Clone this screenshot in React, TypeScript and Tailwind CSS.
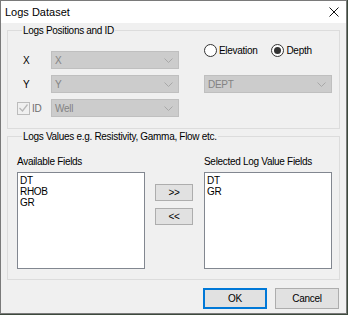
import { useState } from "react";

const available = ["DT", "RHOB", "GR"];
const selected = ["DT", "GR"];

function Chevron() {
  return (
    <svg width="9" height="5" viewBox="0 0 9 5" className="shrink-0">
      <path d="M0.5 0.5 L4.5 4.5 L8.5 0.5" fill="none" stroke="#a8a8a8" strokeWidth="1" />
    </svg>
  );
}

function Combo({ value }: { value: string }) {
  return (
    <div className="flex h-[18px] w-[128px] items-center justify-between border border-[#bfbfbf] bg-[#cccccc] pl-[3px] pr-[5px] text-[#838383]">
      <span>{value}</span>
      <Chevron />
    </div>
  );
}

function Radio({ label, checked, onClick }: { label: string; checked: boolean; onClick: () => void }) {
  return (
    <div className="flex cursor-default items-center gap-[2px]" onClick={onClick}>
      <div className="flex h-[13px] w-[13px] items-center justify-center rounded-full border border-[#333333] bg-white">
        {checked && <div className="h-[7px] w-[7px] rounded-full bg-[#333333]" />}
      </div>
      <span className="whitespace-nowrap text-black">{label}</span>
    </div>
  );
}

function ListBox({ items }: { items: string[] }) {
  return (
    <div className="h-[97px] w-[128px] border border-[#828790] bg-white px-[2px] pt-[2px] leading-[11px] text-black">
      {items.map((item) => (
        <div key={item}>{item}</div>
      ))}
    </div>
  );
}

function Button({ label, primary }: { label: string; primary?: boolean }) {
  return (
    <button
      type="button"
      className={
        primary
          ? "h-[21px] w-[64px] border-2 border-[#0078d7] bg-[#e1e1e1] text-black"
          : "h-[21px] w-[64px] border border-[#adadad] bg-[#e1e1e1] text-black"
      }
    >
      {label}
    </button>
  );
}

function GroupTitle({ children }: { children: string }) {
  return (
    <span className="-mt-[7px] ml-[5px] h-[13px] w-fit whitespace-nowrap bg-[#f0f0f0] px-[1px] leading-[13px] text-black">
      {children}
    </span>
  );
}

export default function App() {
  const [mode, setMode] = useState("depth");

  return (
    <div className="h-screen w-screen bg-[#3d4a3d] font-['Liberation_Sans',sans-serif] text-[10px] tracking-[-0.3px]">
      <div className="flex h-[314px] w-[347px] flex-col border border-[#7a7a7a] bg-[#f0f0f0]">
        <div className="flex h-[22px] shrink-0 items-center justify-between bg-white pl-[4px] pr-[7px] text-[11px] tracking-normal text-black">
          <span>Logs Dataset</span>
          <svg width="10" height="10" viewBox="0 0 10 10">
            <path d="M0.5 0.5 L9.5 9.5 M9.5 0.5 L0.5 9.5" stroke="#111" strokeWidth="1" />
          </svg>
        </div>

        <div className="flex flex-1 flex-col px-[6px]">
          {/* positions group */}
          <div className="mt-[7px] flex h-[99px] flex-col border border-[#dcdcdc] pl-[9px]">
            <GroupTitle>Logs Positions and ID</GroupTitle>
            <div className="flex gap-[25px]">
              <div className="mt-[14px] flex flex-col gap-[6px]">
                <div className="flex items-center">
                  <span className="w-[34px] pl-[6px] text-black">X</span>
                  <Combo value="X" />
                </div>
                <div className="flex items-center">
                  <span className="w-[34px] pl-[6px] text-black">Y</span>
                  <Combo value="Y" />
                </div>
                <div className="flex items-center">
                  <div className="flex w-[34px] items-center gap-[2px]">
                    <div className="flex h-[13px] w-[13px] items-center justify-center border border-[#bcbcbc] bg-[#f0f0f0]">
                      <svg width="9" height="8" viewBox="0 0 9 8">
                        <path d="M0.5 4 L3.5 7 L8.5 0.5" fill="none" stroke="#b8b8b8" strokeWidth="1.3" />
                      </svg>
                    </div>
                    <span className="text-[#6d6d6d]">ID</span>
                  </div>
                  <Combo value="Well" />
                </div>
              </div>
              <div className="mt-[7px] flex flex-col">
                <div className="flex h-[13px] items-center gap-[14px]">
                  <Radio label="Elevation" checked={mode === "elevation"} onClick={() => setMode("elevation")} />
                  <Radio label="Depth" checked={mode === "depth"} onClick={() => setMode("depth")} />
                </div>
                <div className="mt-[18px]">
                  <Combo value="DEPT" />
                </div>
              </div>
            </div>
          </div>

          {/* values group */}
          <div className="mt-[7px] flex h-[144px] flex-col border border-[#dcdcdc] pl-[9px]">
            <GroupTitle>Logs Values e.g. Resistivity, Gamma, Flow etc.</GroupTitle>
            <div className="mt-[12px] flex">
              <div className="flex flex-col">
                <span className="mb-[4px] h-[13px] whitespace-nowrap leading-[13px] text-black">Available Fields</span>
                <ListBox items={available} />
              </div>
              <div className="ml-[10px] mr-[11px] flex flex-col gap-[7px] pt-[29px]">
                <button type="button" className="h-[17px] w-[38px] border border-[#adadad] bg-[#e1e1e1] leading-none text-black">&gt;&gt;</button>
                <button type="button" className="h-[17px] w-[38px] border border-[#adadad] bg-[#e1e1e1] leading-none text-black">&lt;&lt;</button>
              </div>
              <div className="flex flex-col">
                <span className="mb-[4px] h-[13px] whitespace-nowrap leading-[13px] text-black">Selected Log Value Fields</span>
                <ListBox items={selected} />
              </div>
            </div>
          </div>

          <div className="mt-[8px] flex justify-end gap-[8px] pr-[1px]">
            <Button label="OK" primary />
            <Button label="Cancel" />
          </div>
        </div>
      </div>
    </div>
  );
}
